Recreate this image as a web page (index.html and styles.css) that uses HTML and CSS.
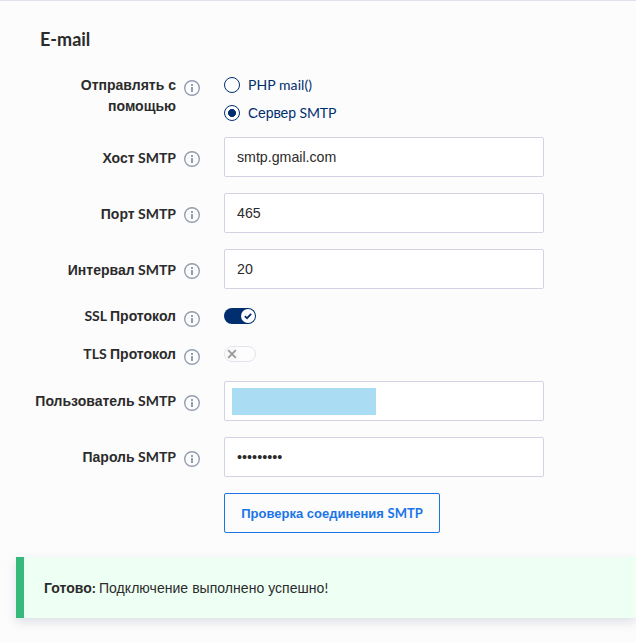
FILE: index.html
```
<!DOCTYPE html>
<html lang="ru">
<head>
<meta charset="utf-8">
<title>E-mail</title>
<link rel="stylesheet" href="styles.css">
</head>
<body>
<svg width="0" height="0" class="defs"><defs>
<symbol id="info" viewBox="0 0 16 16"><circle cx="8" cy="8" r="7.3" fill="none" stroke="currentColor" stroke-width="1.4"/><path d="M7 4h2v2H7zM7 7h2v5H7z" fill="currentColor"/></symbol>
</defs></svg>
<form class="settings">
<h2>E-mail</h2>
<div class="row send">
<div class="label">Отправлять с<br>помощью</div><svg class="info"><use href="#info"/></svg>
<div class="radios">
<label class="radio"><i class="dot"></i><span class="lat php">PHP mail()</span></label>
<label class="radio"><i class="dot on"></i><span class="cyr">Сервер<span class="lat"> SMTP</span></span></label>
</div>
</div>
<div class="row field"><div class="label">Хост<span class="lat"> SMTP</span></div><svg class="info"><use href="#info"/></svg><input type="text" value="smtp.gmail.com"></div>
<div class="row field"><div class="label">Порт<span class="lat"> SMTP</span></div><svg class="info"><use href="#info"/></svg><input type="text" value="465"></div>
<div class="row field"><div class="label">Интервал<span class="lat"> SMTP</span></div><svg class="info"><use href="#info"/></svg><input type="text" value="20"></div>
<div class="row toggle"><div class="label"><span class="lat">SSL </span>Протокол</div><svg class="info"><use href="#info"/></svg><svg class="switch" viewBox="0 0 32 16"><rect width="32" height="16" rx="8" fill="#002e6e"/><circle cx="24" cy="8" r="7" fill="#fff"/><path d="M20.8 8.2l2.2 2 4.2-4.4" fill="none" stroke="#002e6e" stroke-width="1.7"/></svg></div>
<div class="row toggle"><div class="label"><span class="lat">TLS </span>Протокол</div><svg class="info"><use href="#info"/></svg><svg class="switch" viewBox="0 0 32 16"><rect x=".5" y=".5" width="31" height="15" rx="7.5" fill="#fdfdfe" stroke="#e2e3ec"/><circle cx="8" cy="8" r="7" fill="#f8f8f9"/><path d="M4.2 4.2l7.6 7.6M11.8 4.2l-7.6 7.6" stroke="#999" stroke-width="1.8"/></svg></div>
<div class="row field raised"><div class="label">Пользователь<span class="lat"> SMTP</span></div><svg class="info"><use href="#info"/></svg><div class="input"><div class="mask"></div></div></div>
<div class="row field raised"><div class="label">Пароль<span class="lat"> SMTP</span></div><svg class="info"><use href="#info"/></svg><input class="password" type="password" value="123456789"></div>
<button type="button">Проверка соединения <span class="lat">SMTP</span></button>
</form>
<div class="notice"><b>Готово<span class="lat">: </span></b>Подключение выполнено успешно<span class="lat">!</span></div>
</body>
</html>
```
FILE: styles.css
```
* { box-sizing: border-box; }
body {
  margin: 0;
  height: 642px;
  overflow: hidden;
  background: #fcfcfc;
  border-top: 1px solid #dfe1ec;
  color: #2b2b2b;
  font: 14px/21px "Liberation Sans", Arial, sans-serif;
}
.defs { display: block; }
.lat { font-family: Lato, sans-serif; }
h2 { margin: 0; padding: 26px 0 24px 40px; font: 700 18px/24px Lato, sans-serif; }
.row { display: flex; align-items: flex-start; }
.label { width: 176px; text-align: right; font-weight: 700; white-space: nowrap; }
.info { width: 16px; height: 16px; margin: 5px 24px 0 8px; color: #939db1; flex: none; }
.send { height: 62px; }
.radios { color: #002e6e; }
.radio { display: flex; align-items: center; height: 20px; margin-bottom: 8px; }
.php { padding-bottom: 2px; letter-spacing: .08px; }
.cyr { letter-spacing: -.1px; }
.dot { width: 16px; height: 16px; margin-right: 8px; border: 1px solid #002e6e; border-radius: 50%; background: #fff; }
.on { background: radial-gradient(circle, #002e6e 3.7px, #fff 4.3px); }
.field { height: 40px; margin-bottom: 16px; }
.field .label { padding-top: 10px; }
.raised .label { padding-top: 9px; }
.field .info { margin-top: 14px; }
input, .input {
  width: 320px; height: 40px; padding: 0 12px;
  border: 1px solid #d3d3e5; border-radius: 2px; background: #fff;
  color: #2b2b2b; font: 14.2px "Liberation Sans", Arial, sans-serif;
}
.password { font-size: 14.4px; }
.input { padding: 6px 7px; }
.mask { width: 144px; height: 27px; background: #aaddf4; }
.toggle { height: 38px; }
.toggle .info { margin-top: 6px; }
.switch { width: 32px; height: 16px; margin-top: 3px; }
button {
  display: block; width: 216px; height: 40px; margin-left: 224px; padding: 0;
  border: 1px solid #1b75e8; border-radius: 2px; background: #fcfcfc; color: #1b75e8;
  font: 700 13px "Liberation Sans", Arial, sans-serif;
}
.notice {
  height: 61px; margin: 24px 0 0 16px; padding: 20px; letter-spacing: .04px;
  border-left: 8px solid #38b97c; background: #eefff4;
  box-shadow: 0 4px 10px rgba(50, 60, 110, .15);
}
```
